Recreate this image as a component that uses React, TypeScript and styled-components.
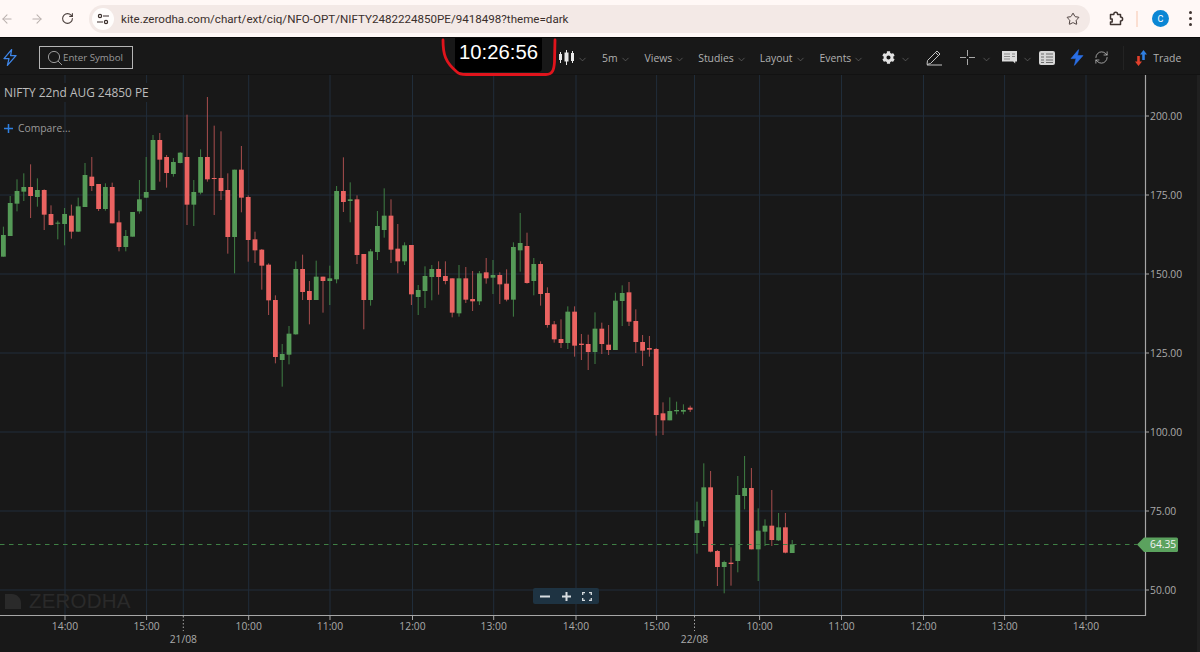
import React from "react";
import styled, { createGlobalStyle } from "styled-components";
import { ArrowLeft, ArrowRight, RotateCw, Star, ChevronDown, RefreshCw } from "lucide-react";
import { FaCog } from "react-icons/fa";

const Global = createGlobalStyle`
  html, body { margin: 0; padding: 0; background: #181818; }
  body { font-family: "Open Sans", "Noto Sans", sans-serif; overflow: hidden; }
`;

const Page = styled.div`
  width: 1200px; height: 652px; display: flex; flex-direction: column; position: relative; overflow: hidden; background: #181818;
`;

/* ---------- browser bar ---------- */
const BrowserBar = styled.header`
  height: 37px; flex: none; display: flex; align-items: center; background: #fff8f6; border-bottom: 1px solid #0a0a0a;
`;
const NavIcon = styled.span<{ $ml: number; $c: string }>`
  display: inline-flex; margin-left: ${p => p.$ml}px; color: ${p => p.$c};
`;
const Omnibox = styled.div`
  margin-left: 15px; width: 1001px; height: 28px; border-radius: 14px; background: #f3e9e6; display: flex; align-items: center; position: relative;
`;
const TuneBadge = styled.span`
  width: 22px; height: 22px; margin-left: 3px; border-radius: 50%; background: #fffdfc; display: inline-flex; align-items: center; justify-content: center;
`;
const Url = styled.span`
  margin-left: 7px; font: 11.6px Roboto, "Liberation Sans", sans-serif; color: #3a2f2c; white-space: nowrap;
`;
const StarSlot = styled.span`
  position: absolute; right: 10px; top: 7px; display: inline-flex; color: #3f3431;
`;
const Sep = styled.span`
  width: 2px; height: 16px; margin-left: 12px; background: #fbdfd2;
`;
const Avatar = styled.span`
  width: 17px; height: 17px; margin-left: 14px; border-radius: 50%; background: #0b86d4; color: #fff; font: 9px Roboto, sans-serif; display: inline-flex; align-items: center; justify-content: center;
`;
const Dots = styled.span`
  margin-left: 20px; width: 3px; display: flex; flex-direction: column; gap: 3px;
  i { display: block; width: 3px; height: 3px; border-radius: 50%; background: #3f3431; }
`;

/* ---------- chart toolbar ---------- */
const Toolbar = styled.nav`
  height: 37px; flex: none; display: flex; align-items: center; background: #181818; padding-top: 3px; box-sizing: border-box; border-bottom: 1px solid #121212;
`;
const SearchBox = styled.div`
  margin-left: 22px; width: 94px; height: 23px; box-sizing: border-box; border: 1px solid #b5b5b5; display: flex; align-items: center; padding-left: 7px; color: #9a9a9a; font-size: 9.7px;
`;
const MenuLabel = styled.span<{ $ml: number }>`
  margin-left: ${p => p.$ml}px; font-size: 10.4px; color: #b0b0b0; white-space: nowrap; display: inline-flex; align-items: center;
`;
const Slot = styled.span<{ $ml: number }>`
  margin-left: ${p => p.$ml}px; display: inline-flex; align-items: center; color: #cfcfcf;
`;
const Chev = styled(ChevronDown)<{ $ml?: number }>`
  width: 11px; height: 11px; margin-left: ${p => p.$ml ?? 2}px; margin-top: 4px; color: #777; stroke-width: 1.3;
`;
const Divider = styled.span`
  width: 1px; height: 24px; margin-left: 14px; background: #232323;
`;

/* ---------- clock overlay ---------- */
const ClockBox = styled.div`
  position: absolute; left: 455px; top: 38px; width: 87px; height: 34px; background: #000; border-radius: 0 0 4px 4px; color: #fff;
  font: 20.3px "Liberation Sans", Arial, sans-serif; display: flex; align-items: center; justify-content: center; padding-bottom: 5px; box-sizing: border-box;
`;
const RedMark = styled.svg`
  position: absolute; left: 438px; top: 36px; width: 120px; height: 44px; overflow: visible;
`;

/* ---------- chart ---------- */
const ChartArea = styled.main`
  flex: 1; position: relative; background: #181818;
`;
const ChartSvg = styled.svg`
  display: block; width: 1200px; height: 577px;
  text { font-family: "Open Sans", "Noto Sans", sans-serif; font-size: 10.3px; fill: #aaaaaa; }
`;
const Title = styled.div`
  position: absolute; left: 0; top: 8px; padding: 0 2px 0 4px; height: 19px; line-height: 19px; background: #181818; font-size: 11.9px; color: #bdbdbd; white-space: nowrap;
`;
const Compare = styled.div`
  position: absolute; left: 4px; top: 46px; display: flex; align-items: center; gap: 5px; font-size: 10.3px; color: #9a9a9a;
`;
const Watermark = styled.div`
  position: absolute; left: 5px; top: 514px; display: flex; align-items: center; gap: 8px; font: 20.5px "Liberation Sans", sans-serif; letter-spacing: 0.2px; color: #2a2a2a;
`;
const ZoomBar = styled.div`
  position: absolute; left: 533px; top: 513px; width: 66px; height: 16px; border-radius: 2px; background: #1e3342; display: flex; align-items: center; justify-content: space-around; padding: 0 2px; box-sizing: border-box;
`;

type C = [string, number, number, number, number];
const blocks: { base: number; from: number; rows: C[] }[] = [
  { base: 100, from: 0, rows: [
    ["g",380,405,470,470],["g",288,309,408,408],["g",238,273,311,334],["g",220,261,275,303],["r",193,261,288,354],
    ["g",235,270,291,320],["r",268,270,344,390],["r",316,342,375,376],["g",362,368,371,418],["g",324,342,372,436],
    ["r",314,347,395,416],["g",293,319,395,396],["g",189,225,321,321],["r",171,230,258,273],["r",252,252,327,333],
    ["g",250,261,327,332],["r",248,261,370,370],["r",332,367,441,454],["g",390,408,441,454],["g",336,336,410,410],
    ["g",240,298,334,341],["g",171,276,293,294],["g",105,120,270,270],["r",99,120,179,245],["r",165,171,219,263],
    ["g",174,186,222,230],["g",156,158,189,190],["r",44,171,314,375],["g",240,276,314,378],["g",148,171,278,283],
    ["r",-9,171,238,245],["r",77,234,237,345],["r",94,234,273,300],["r",220,270,411,461],["g",209,209,411,520],
    ["r",138,209,293,337],["r",286,291,420,485],["r",395,418,451,489],["r",447,449,497,569],
  ]},
  { base: 250, from: 39, rows: [
    ["r",40,44,151,195],["r",136,150,321,340],["g",282,312,330,410],["g",228,251,314,343],["g",34,57,253,254],
  ]},
  { base: 150, from: 44, rows: [
    ["r",314,357,426,450],["r",393,423,450,523],["g",332,380,450,450],["r",380,380,393,488],["g",347,385,393,465],
    ["g",108,123,388,400],["r",22,123,156,186],["g",97,148,153,217],["r",136,148,315,342],["r",312,312,450,538],
    ["g",297,304,450,467],["g",183,228,306,330],["g",115,197,240,263],["r",148,197,299,339],["r",222,296,334,370],
    ["g",277,286,334,345],["r",285,285,433,465],["g",405,420,441,495],["g",349,378,423,474],["g",345,357,381,451],
    ["r",334,357,381,434],["r",334,378,393,403],["r",385,385,488,502],["g",345,385,490,500],["r",351,385,449,459],
    ["r",363,447,454,483],["g",363,370,454,465],["r",324,367,385,401],["g",330,375,383,432],["r",367,375,403,462],
    ["r",358,401,449,454],["g",277,291,449,500],["g",189,279,301,365],["r",248,288,399,401],["g",324,342,393,436],
    ["r",334,342,432,467],
  ]},
  { base: 260, from: 80, rows: [
    ["r",82,99,195,203],["r",183,193,238,248],["r",178,237,249,264],["g",139,155,249,267],["r",139,155,257,290],
    ["r",222,251,255,300],["r",224,252,276,330],["g",157,206,276,312],["r",188,206,252,282],["r",195,254,270,285],
    ["g",98,122,270,270],["g",76,99,123,198],["r",66,97,185,198],["r",148,183,246,279],["r",225,246,272,318],
    ["r",228,264,269,290],["r",264,267,465,527],["r",427,460,481,525],["g",412,453,481,481],["g",425,450,454,463],
    ["g",433,450,455,463],["r",437,443,449,456],
  ]},
  { base: 440, from: 102, rows: [
    ["g",185,241,279,341],["g",70,142,243,260],["r",93,142,335,337],["r",330,333,381,438],["g",362,366,381,460],
    ["r",322,368,372,437],["g",108,165,363,397],["g",48,144,168,208],["r",84,144,328,328],["g",205,272,328,423],
    ["g",238,257,275,318],["r",150,257,300,318],["g",219,262,301,303],["r",219,262,338,340],["g",300,313,339,339],
  ]},
];

const candles = blocks.flatMap(b =>
  b.rows.map((r, i) => ({
    up: r[0] === "g",
    x: 3.4 + 6.8 * (b.from + i),
    wt: b.base + r[1] / 3,
    bt: b.base + r[2] / 3,
    bb: b.base + r[3] / 3,
    wb: b.base + r[4] / 3,
  }))
);

const vGrid = [65, 146.6, 183.3, 248.7, 330, 412.5, 493.7, 576, 656.6, 694.5, 759.6, 841.5, 923.5, 1004.6, 1086];
const hGrid = [[116, "200.00"], [195, "175.00"], [274, "150.00"], [353, "125.00"], [432, "100.00"], [511, "75.00"], [590, "50.00"]] as const;
const times = [[65, "14:00"], [146.6, "15:00"], [248.7, "10:00"], [330, "11:00"], [412.5, "12:00"], [493.7, "13:00"], [576, "14:00"], [656.6, "15:00"], [759.6, "10:00"], [841.5, "11:00"], [923.5, "12:00"], [1004.6, "13:00"], [1086, "14:00"]] as const;
const dates = [[183.3, "21/08"], [694.5, "22/08"]] as const;

const Chart = () => (
  <ChartSvg viewBox="0 75 1200 577">
    {vGrid.map(x => <line key={x} x1={x} x2={x} y1={75} y2={615} stroke="#202d3a" strokeWidth={1} />)}
    {hGrid.map(([y]) => <line key={y} x1={0} x2={1145} y1={y} y2={y} stroke="#202d3a" strokeWidth={1} />)}
    {candles.map((c, i) => (
      <g key={i}>
        <line x1={c.x} x2={c.x} y1={c.wt} y2={c.wb} stroke={c.up ? "#3f7f44" : "#a84e4e"} strokeWidth={1} />
        <rect x={c.x - 2.4} y={c.bt} width={4.8} height={Math.max(c.bb - c.bt, 1)} fill={c.up ? "#559a57" : "#ea6361"} />
      </g>
    ))}
    <line x1={0} x2={1137} y1={544.5} y2={544.5} stroke="#3f8045" strokeWidth={1} strokeDasharray="4.5 4.5" />
    <path d="M0 615.5H1145.5V75" fill="none" stroke="#a6a6a6" strokeWidth={1.2} />
    {hGrid.map(([y, t]) => (
      <g key={t}>
        <line x1={1145.5} x2={1149} y1={y} y2={y} stroke="#a6a6a6" />
        <text x={1150} y={y + 3.7}>{t}</text>
      </g>
    ))}
    {times.map(([x, t], i) => (
      <g key={i}>
        <line x1={x} x2={x} y1={615} y2={620} stroke="#a6a6a6" />
        <text x={x} y={630} textAnchor="middle">{t}</text>
      </g>
    ))}
    {dates.map(([x, t]) => (
      <g key={t}>
        <line x1={x} x2={x} y1={616} y2={631} stroke="#a6a6a6" strokeDasharray="1.5 2" />
        <text x={x} y={643} textAnchor="middle">{t}</text>
      </g>
    ))}
    <path d="M1137 544.5L1144 537.5H1176.5a1.5 1.5 0 0 1 1.5 1.5V550.5a1.5 1.5 0 0 1-1.5 1.5H1144Z" fill="#5ba25e" />
    <text x={1150} y={548.3} style={{ fill: "#f2f2f2" }}>64.35</text>
    <rect x={1197} y={52} width={3} height={600} fill="#202020" />
  </ChartSvg>
);

const Bolt = ({ filled }: { filled?: boolean }) => (
  <svg width="14" height="17" viewBox="0 0 14 17">
    <path d="M8.6 .6 1 9.6h5l-1.6 6.8 8.6-9.8H7.6Z" fill={filled ? "#2a6fe6" : "none"} stroke={filled ? "#2a6fe6" : "#3f86e8"} strokeWidth={filled ? 0.6 : 1.3} strokeLinejoin="round" />
  </svg>
);

const CandleIcon = () => (
  <svg width="17" height="15" viewBox="0 0 17 15" fill="#e8e8e8" stroke="#e8e8e8">
    <path d="M2.5 2v11M8.5 0v15M14.5 1v12" strokeWidth="1" />
    <rect x="1" y="4" width="3" height="6" stroke="none" />
    <rect x="6.5" y="2.5" width="4" height="9" stroke="none" />
    <rect x="13" y="3" width="3" height="8" stroke="none" />
  </svg>
);

const ExtensionIcon = () => (
  <svg width="15" height="15" viewBox="0 0 15 15" fill="none" stroke="#3f3431" strokeWidth="1.5" strokeLinejoin="round">
    <path d="M1.5 3.500H4.800C4.800 .6 8.600 .6 8.600 3.500H11.500V6C14.300 6 14.300 10 11.500 10V13.500H1.500V11H3.200V8H1.500Z" />
  </svg>
);

const App = () => (
  <Page>
    <Global />
    <BrowserBar>
      <NavIcon $ml={0} $c="#b9b0ad"><ArrowLeft size={14} strokeWidth={1.8} /></NavIcon>
      <NavIcon $ml={16} $c="#b9b0ad"><ArrowRight size={14} strokeWidth={1.8} /></NavIcon>
      <NavIcon $ml={17} $c="#4a3f3c"><RotateCw size={13} strokeWidth={2} /></NavIcon>
      <Omnibox>
        <TuneBadge>
          <svg width="12" height="12" viewBox="0 0 12 12" fill="none" stroke="#3a2f2c" strokeWidth="1.2">
            <circle cx="3" cy="3" r="1.6" /><path d="M6 3h6M0 9h6" /><circle cx="9" cy="9" r="1.6" />
          </svg>
        </TuneBadge>
        <Url>kite.zerodha.com/chart/ext/ciq/NFO-OPT/NIFTY2482224850PE/9418498?theme=dark</Url>
        <StarSlot><Star size={14} strokeWidth={1.6} /></StarSlot>
      </Omnibox>
      <NavIcon $ml={19} $c="#3f3431"><ExtensionIcon /></NavIcon>
      <Sep />
      <Avatar>C</Avatar>
      <Dots><i /><i /><i /></Dots>
    </BrowserBar>

    <Toolbar>
      <Slot $ml={3}><Bolt /></Slot>
      <SearchBox>
        <svg width="16" height="16" viewBox="0 0 16 16" fill="none" stroke="#9a9a9a" strokeWidth="1">
          <circle cx="7" cy="7" r="5.6" /><path d="M11 11l4 4" />
        </svg>
        Enter Symbol
      </SearchBox>
      <Slot $ml={425}><CandleIcon /><Chev /></Slot>
      <MenuLabel $ml={14}>5m<Chev /></MenuLabel>
      <MenuLabel $ml={14}>Views<Chev /></MenuLabel>
      <MenuLabel $ml={13}>Studies<Chev /></MenuLabel>
      <MenuLabel $ml={13}>Layout<Chev /></MenuLabel>
      <MenuLabel $ml={14}>Events<Chev /></MenuLabel>
      <Slot $ml={18}><FaCog size={13} color="#e2e2e2" /><Chev $ml={5} /></Slot>
      <Slot $ml={15}>
        <svg width="17" height="17" viewBox="0 0 17 17" fill="none" stroke="#c4c4c4" strokeWidth="1">
          <path d="M1.5 11.5 11 2l3 3-9.5 9.5-3.5 1ZM9.5 3.5l3 3M1 16h15" />
        </svg>
      </Slot>
      <Slot $ml={17}>
        <svg width="15" height="15" viewBox="0 0 15 15" stroke="#a8a8a8" strokeWidth="1">
          <path d="M0 7.5h6M9 7.5h6M7.5 0v6M7.5 9v6" />
        </svg>
        <Chev $ml={6} />
      </Slot>
      <Slot $ml={10}>
        <svg width="16" height="15" viewBox="0 0 16 15">
          <path d="M0 1h15v10.5h-1.8v2l-2-2H0Z" fill="#dcdcdc" />
          <path d="M2 4h6M2 6.500h6M2 9h6M10 4h3M10 6.500h3" stroke="#8a8a8a" strokeWidth="1" />
        </svg>
        <Chev $ml={4} />
      </Slot>
      <Slot $ml={6}>
        <svg width="16" height="14" viewBox="0 0 16 14">
          <rect x="0" y="0" width="16" height="14" rx="2" fill="#d6d6d6" />
          <path d="M2 3h3M2 6h3M2 9h3M2 11.500h3M7 3h7M7 6h7M7 9h7M7 11.500h7" stroke="#6c6c6c" strokeWidth="1" />
        </svg>
      </Slot>
      <Slot $ml={15}><Bolt filled /></Slot>
      <Slot $ml={10}><RefreshCw size={15} strokeWidth={1.2} color="#c8c8c8" /></Slot>
      <Divider />
      <Slot $ml={11}>
        <svg width="12" height="18" viewBox="0 0 12 18">
          <path d="M8.500 1l3.500 4.500H9.800V11H7.200V5.500H5Z" fill="#2f7fe0" />
          <path d="M3.500 17L0 12.500h2.200V7h2.600v5.500H7Z" fill="#e2402c" />
        </svg>
      </Slot>
      <MenuLabel $ml={6}>Trade</MenuLabel>
    </Toolbar>

    <ChartArea>
      <Chart />
      <Title>NIFTY 22nd AUG 24850 PE</Title>
      <Compare>
        <svg width="9" height="9" viewBox="0 0 9 9" stroke="#2f7fe0" strokeWidth="1.5"><path d="M0 4.500h9M4.500 0v9" /></svg>
        Compare...
      </Compare>
      <Watermark>
        <svg width="16" height="15" viewBox="0 0 16 15"><path d="M0 0h7c5 0 9 4 9 9v6H0Z" fill="#2a2a2a" /></svg>
        ZERODHA
      </Watermark>
      <ZoomBar>
        <svg width="11" height="3" viewBox="0 0 11 3"><rect width="10" height="2" y=".5" fill="#d8dde0" /></svg>
        <svg width="11" height="11" viewBox="0 0 11 11" stroke="#d8dde0" strokeWidth="2"><path d="M1 5.500h9M5.500 1v9" /></svg>
        <svg width="10" height="9" viewBox="0 0 10 9" fill="none" stroke="#d8dde0" strokeWidth="1.300"><path d="M.7 3V.7H3M7 .7h2.300V3M9.300 6v2.300H7M3 8.300H.7V6" /></svg>
      </ZoomBar>
    </ChartArea>

    <ClockBox>10:26:56</ClockBox>
    <RedMark viewBox="0 0 120 44">
      <path d="M5 4C5 18 7 26 19 36C21 38 24 38.500 28 38.500H108C115 38.500 116 33 116.500 26L117 4" fill="none" stroke="#e0141c" strokeWidth="2.800" strokeLinecap="round" />
    </RedMark>
  </Page>
);

export default App;
